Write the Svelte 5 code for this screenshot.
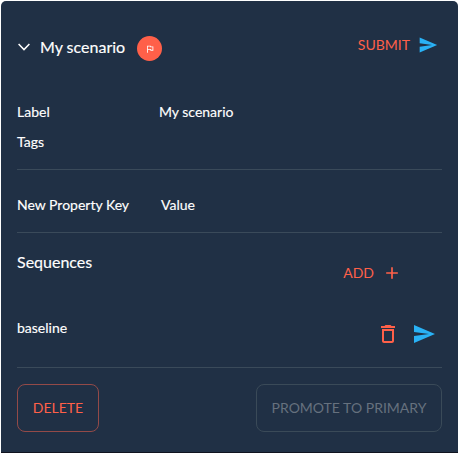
<script>
  const sendPath = 'M2.01 21 23 12 2.01 3 2 10l15 2-15 2z';
  const properties = [
    { key: 'Label', value: 'My scenario' },
    { key: 'Tags', value: '' }
  ];
  const sequences = ['baseline'];
</script>

<main>
  <section class="card">
    <header>
      <div class="title">
        <svg class="chevron" viewBox="0 0 12 8"><path d="M.6.9 6 6.6 11.4.9" fill="none" stroke="#fff" stroke-width="1.5" /></svg>
        <h1>My scenario</h1>
        <span class="badge">
          <svg viewBox="0 0 24 24" width="10" height="10"><path fill="#fff" d="m12.36 6 .4 2H18v6h-3.36l-.4-2H7V6h5.36M14 4H5v17h2v-7h5.6l.4 2h7V6h-5.600z" /></svg>
        </span>
      </div>
      <button class="text submit">SUBMIT
        <svg viewBox="0 0 24 24" width="20" height="20"><path d={sendPath} /></svg>
      </button>
    </header>

    <div class="properties">
      {#each properties as p}
        <div class="row"><span>{p.key}</span><span>{p.value}</span></div>
      {/each}
    </div>
    <div class="new-property"><span>New Property Key</span><span>Value</span></div>

    <div class="sequences">
      <div class="seq-head">
        <h2>Sequences</h2>
        <button class="text add">ADD
          <svg viewBox="0 0 24 24" width="20" height="20"><path d="M19 13h-6v6h-2v-6H5v-2h6V5h2v6h6z" /></svg>
        </button>
      </div>
      {#each sequences as name}
        <div class="seq-row">
          <span>{name}</span>
          <div class="actions">
            <svg class="trash" viewBox="0 0 24 24" width="24" height="24"><path d="M6 19c0 1.100.9 2 2 2h8c1.100 0 2-.9 2-2V7H6v12zM8 9h8v10H8V9zm7.500-5-1-1h-5l-1 1H5v2h14V4z" /></svg>
            <svg class="send" viewBox="0 0 24 24" width="24" height="24"><path d={sendPath} /></svg>
          </div>
        </div>
      {/each}
    </div>

    <footer>
      <button class="outlined">DELETE</button>
      <button class="outlined muted" disabled>PROMOTE TO PRIMARY</button>
    </footer>
  </section>
</main>

<style>
  :global(body) { margin: 0; background: #fff; }
  main {
    box-sizing: border-box;
    width: 460px;
    height: 454px;
    padding: 1px 2px 1px 1px;
    overflow: hidden;
    font-family: Lato, sans-serif;
    font-size: 14px;
    line-height: 20px;
    letter-spacing: 0;
    color: #fff;
    -webkit-text-stroke: 0.15px currentColor;
  }
  .card {
    box-sizing: border-box;
    height: 452px;
    padding: 0 16px;
    background: #203045;
    border-bottom: 1px solid #10131f;
    border-radius: 5px 5px 0 0;
  }
  header {
    box-sizing: border-box;
    height: 88px;
    display: flex;
    justify-content: space-between;
    align-items: center;
    padding: 4px 4px 0 1px;
  }
  .title { display: flex; align-items: center; }
  .chevron { width: 12px; height: 8px; margin-right: 10px; }
  h1, h2 { margin: 0; font-size: 16px; font-weight: 400; line-height: 24px; letter-spacing: 0; }
  .badge {
    width: 25px;
    height: 25px;
    margin-left: 12px;
    margin-top: 3px;
    display: flex;
    align-items: center;
    justify-content: center;
    border-radius: 50%;
    background: #ff6049;
  }
  button {
    margin: 0;
    padding: 0;
    border: 0;
    background: none;
    font: inherit;
    letter-spacing: 0;
    color: #ff6049;
    -webkit-text-stroke: 0;
  }
  svg { display: block; fill: currentColor; }
  .text { display: flex; align-items: center; gap: 8px; }
  .submit { margin-top: -5px; }
  .submit svg, .send { color: #29b2f6; }
  .properties {
    box-sizing: border-box;
    height: 81px;
    padding-top: 13px;
    border-bottom: 1px solid #3a4a5a;
  }
  .row { display: grid; grid-template-columns: 142px 1fr; height: 30px; }
  .new-property {
    box-sizing: border-box;
    height: 63px;
    padding-top: 25px;
    display: grid;
    grid-template-columns: 144px 1fr;
    border-bottom: 1px solid #3a4a5a;
  }
  .sequences {
    box-sizing: border-box;
    height: 135px;
    border-bottom: 1px solid #3a4a5a;
  }
  .seq-head {
    height: 58px;
    display: flex;
    justify-content: space-between;
    align-items: center;
    padding-right: 40px;
  }
  .add { margin-top: 22px; }
  .seq-row { display: flex; justify-content: space-between; align-items: flex-start; margin-top: 27px; }
  .actions { display: flex; gap: 12px; padding: 4px 6px 0 0; }
  .trash { color: #ff6049; }
  footer { display: flex; justify-content: space-between; padding-top: 16px; }
  .outlined {
    box-sizing: border-box;
    width: 82px;
    height: 48px;
    border: 1px solid #934a48;
    border-radius: 8px;
  }
  .muted { width: 186px; color: #66717e; border-color: #3a4a58; }
</style>
